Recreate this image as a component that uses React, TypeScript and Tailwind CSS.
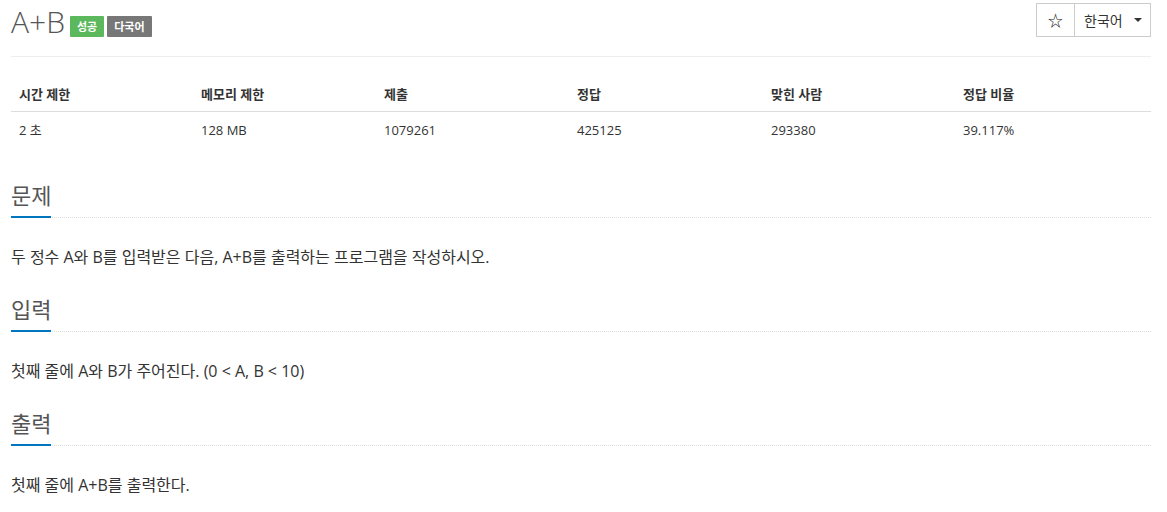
import React from "react";

const font = { fontFamily: '"Open Sans", "Noto Sans CJK KR", sans-serif' };

function Section({ title, children }: { title: string; children: React.ReactNode }) {
  return (
    <section>
      <div className="relative border-b border-dotted border-[#ddd] mb-0">
        <h2 className="inline-block text-[22px] leading-[30px] text-[#555] pb-[6px] border-b-2 border-[#0076c0] -mb-px font-normal">
          {title}
        </h2>
      </div>
      <p className="text-[16px] text-[#333] leading-[22px] mt-[28px] mb-[26px]">{children}</p>
    </section>
  );
}

export default function App() {
  const heads = ["시간 제한", "메모리 제한", "제출", "정답", "맞힌 사람", "정답 비율"];
  const vals = ["2 초", "128 MB", "1079261", "425125", "293380", "39.117%"];
  const widths = ["w-[182px]", "w-[183px]", "w-[193px]", "w-[194px]", "w-[192px]", "w-[196px]"];
  return (
    <div style={font} className="bg-white w-[1167px] h-[512px] overflow-hidden px-[11px] text-[#333]">
      <div className="w-[1140px]">
        <div className="flex items-start justify-between pt-[3px] pb-[17px] border-b border-[#eee]">
          <div className="flex items-end pt-[2px]">
            <span className="text-[30px] leading-[34px] text-[#555] font-light mr-[5px]">A+B</span>
            <span className="bg-[#5cb85c] text-white text-[11px] font-bold leading-[21px] h-[21px] px-[7px] rounded-[1px] mr-[3px] mb-[2px]">성공</span>
            <span className="bg-[#777] text-white text-[11px] font-bold leading-[21px] h-[21px] px-[7px] rounded-[1px] mb-[2px]">다국어</span>
          </div>
          <div className="flex h-[34px] border border-[#ccc]">
            <div className="w-[38px] flex items-center justify-center border-r border-[#ccc] text-[15px] text-[#222]">☆</div>
            <div className="w-[75px] flex items-center pl-[9px] text-[14px] text-[#333]">
              한국어
              <span className="ml-[11px] w-0 h-0 border-l-[4px] border-r-[4px] border-t-[4px] border-l-transparent border-r-transparent border-t-[#333]" />
            </div>
          </div>
        </div>

        <table className="w-[1140px] mt-[20px] mb-[32px] border-collapse">
          <thead>
            <tr className="border-b border-[#ddd]">
              {heads.map((h, i) => (
                <th key={h} className={`${widths[i]} text-left text-[13px] font-bold leading-[20px] px-[8px] pt-[7px] pb-[7px] text-[#333]`}>
                  {h}
                </th>
              ))}
            </tr>
          </thead>
          <tbody>
            <tr>
              {vals.map((v) => (
                <td key={v} className="text-[13px] leading-[20px] px-[8px] pt-[8px] pb-[8px] text-[#333]">
                  {v}
                </td>
              ))}
            </tr>
          </tbody>
        </table>

        <Section title="문제">두 정수 A와 B를 입력받은 다음, A+B를 출력하는 프로그램을 작성하시오.</Section>
        <Section title="입력">첫째 줄에 A와 B가 주어진다. (0 &lt; A, B &lt; 10)</Section>
        <Section title="출력">첫째 줄에 A+B를 출력한다.</Section>
      </div>
    </div>
  );
}
